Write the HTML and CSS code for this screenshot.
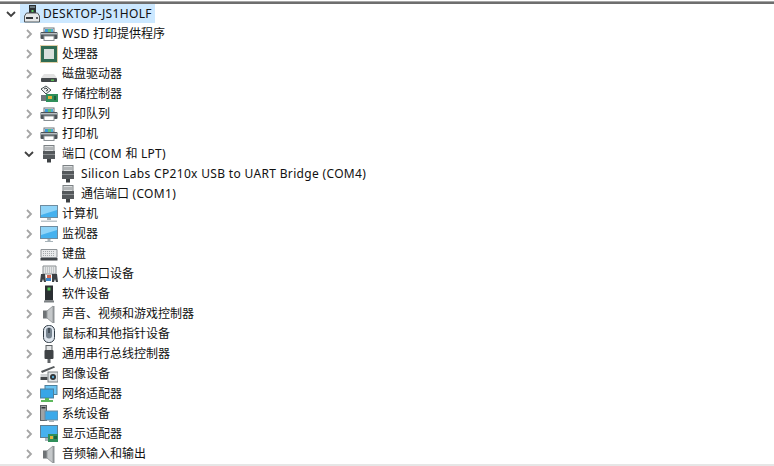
FILE: index.html
```html
<!DOCTYPE html>
<html lang="zh">
<head>
<meta charset="utf-8">
<title>设备管理器</title>
<link rel="stylesheet" href="styles.css">
</head>
<body>
<svg class="defs" width="0" height="0">
  <defs>
    <symbol id="chev-r" viewBox="0 0 10 10"><path d="M3 1l4 4-4 4" fill="none" stroke="#a6a6a6" stroke-width="1.8"/></symbol>
    <symbol id="chev-d" viewBox="0 0 10 10"><path d="M1 3l4 4 4-4" fill="none" stroke="#404040" stroke-width="1.8"/></symbol>
    <symbol id="pc" viewBox="0 0 18 18"><rect x="6" y="0" width="7" height="9" fill="#2b3033"/><rect x="7" y="1" width="5" height="2" fill="#6d7a80"/><rect x="8.500" y="5" width="2" height="2" fill="#57c95a"/><path d="M1.500 11l2-3h11l2 3v6h-15z" fill="#e6e8e9" stroke="#53585b"/><rect x="3" y="12" width="7" height="2" fill="#33383b"/><rect x="13" y="12" width="2" height="2" fill="#5a5f62"/></symbol>
    <symbol id="printer" viewBox="0 0 18 18"><rect x="4" y="3" width="10" height="4" fill="#fff" stroke="#6a7378"/><rect x="5" y="4" width="3" height="3" fill="#3d9ad6"/><rect x="8" y="4" width="3" height="3" fill="#5cc07a"/><rect x="11" y="4" width="2" height="3" fill="#4fb0d8"/><rect x="0.500" y="7" width="17" height="7" rx="1" fill="#4c5459"/><rect x="1" y="8" width="16" height="1.500" fill="#b8bfc3"/><rect x="4" y="11" width="10" height="4.500" fill="#fff" stroke="#8a9094"/></symbol>
    <symbol id="cpu" viewBox="0 0 18 18"><rect x="0.500" y="0.500" width="17" height="17" fill="none" stroke="#c2a04e" stroke-dasharray="1 1"/><rect x="1" y="1" width="16" height="16" fill="#2f6b52"/><rect x="4" y="4" width="10" height="10" fill="#d9e0dc"/></symbol>
    <symbol id="disk" viewBox="0 0 18 18"><path d="M4 9h10l3 4v4H1v-4z" fill="#e2e2e2"/><rect x="1" y="13" width="16" height="4" rx="1" fill="#44494c"/><rect x="11" y="14.500" width="3" height="1.500" fill="#58c04f"/></symbol>
    <symbol id="storage" viewBox="0 0 18 18"><path d="M1 4l5-3 5 4-5 4z" fill="#eef0f0" stroke="#4a5256"/><path d="M4 4l2-1 2 2-2 1" stroke="#3b4144" fill="none"/><path d="M1 10h7v6H1z" fill="#6f767a"/><rect x="6" y="9" width="12" height="8" fill="#2f8f5a"/><rect x="8" y="11" width="4" height="3" fill="#e2b23c"/><rect x="14" y="11" width="2" height="4" fill="#1e5f3d"/></symbol>
    <symbol id="port" viewBox="0 0 18 18"><rect x="4" y="0.500" width="10" height="6" fill="#d9dcdd" stroke="#7b8083"/><path d="M6 2v3M8 2v3M10 2v3M12 2v3" stroke="#8b8f92"/><rect x="3" y="6" width="12" height="8" fill="#55595c"/><rect x="3" y="9" width="12" height="1" fill="#8a8e90"/><rect x="7" y="14" width="4" height="3.500" fill="#3d4144"/></symbol>
    <symbol id="computer" viewBox="0 0 18 18"><rect x="0.500" y="0.500" width="17" height="12" fill="#46b1ee" stroke="#6e8ca0"/><path d="M1 1h16v4L1 10z" fill="#8fd4f8"/><rect x="7" y="13" width="4" height="2" fill="#a8b4ba"/><rect x="1" y="15.500" width="16" height="1.500" fill="#bcc6cb"/></symbol>
    <symbol id="monitor" viewBox="0 0 18 18"><rect x="0.500" y="1.500" width="17" height="12" fill="#46b1ee" stroke="#6e8ca0"/><path d="M1 2h16v3L1 10z" fill="#8fd4f8"/><rect x="7.500" y="14" width="3" height="2" fill="#a8b4ba"/><rect x="5" y="16" width="8" height="1" fill="#a8b4ba"/></symbol>
    <symbol id="keyboard" viewBox="0 0 18 18"><path d="M1 4.500h16v8H1z" fill="#e8eaeb" stroke="#8f9498"/><path d="M3 6.500h12M3 8.500h12M3 10.500h12" stroke="#a5aaad" stroke-dasharray="1 1"/><rect x="0.500" y="13" width="17" height="2.500" fill="#3e4347"/></symbol>
    <symbol id="hid" viewBox="0 0 18 18"><path d="M3 1h13v8H3z" fill="#e4e6e7" stroke="#8a8f92"/><path d="M5 3h9M5 5h9M5 7h9" stroke="#9fa4a7" stroke-dasharray="1 1"/><path d="M1 9h4l1 8H4l-1-3-1 3H0z" fill="#3d4246"/><path d="M12 9h5l1 8h-2l-1-3-1 3h-2z" fill="#3d4246"/><rect x="7" y="10" width="4" height="3" fill="#d4654f"/><rect x="6" y="13" width="5" height="3" fill="#3f87c8"/></symbol>
    <symbol id="soft" viewBox="0 0 18 18"><rect x="5" y="0.500" width="8" height="15" fill="#2b2f32"/><rect x="7.500" y="2.500" width="3" height="3" fill="#57c95a"/><rect x="4" y="15.500" width="10" height="2" fill="#7c8184"/></symbol>
    <symbol id="speaker" viewBox="0 0 18 18"><rect x="3" y="5.500" width="5" height="8" fill="#6f7376"/><path d="M7 6l6-5v17l-6-5z" fill="#c5c8ca" stroke="#9a9ea0"/><rect x="13" y="1" width="1.500" height="17" fill="#8e9295"/></symbol>
    <symbol id="mouse" viewBox="0 0 18 18"><rect x="3.500" y="0.500" width="11" height="17" rx="5" fill="#dfe6ee" stroke="#2f3a44"/><rect x="6" y="2.500" width="6" height="11" rx="3" fill="#76838f"/><rect x="8.200" y="3" width="1.600" height="5" fill="#39434c"/></symbol>
    <symbol id="usb" viewBox="0 0 18 18"><rect x="6" y="0.500" width="6" height="5" fill="#e2e4e5" stroke="#5b6063"/><rect x="4.500" y="5" width="9" height="9" rx="1" fill="#3f4346"/><rect x="7.500" y="14" width="3" height="4" fill="#5f6366"/></symbol>
    <symbol id="camera" viewBox="0 0 18 18"><path d="M1 6l13-5 1 1.500L2 8z" fill="#55595c"/><rect x="0.500" y="9" width="7" height="3" fill="#d0d3d5"/><rect x="0.500" y="12" width="7" height="3" fill="#44484b"/><rect x="8" y="7" width="10" height="10" fill="#dfe3e5" stroke="#7c8184"/><circle cx="13" cy="12" r="3" fill="#2f3336"/><circle cx="13" cy="12" r="1.200" fill="#57a9d6"/></symbol>
    <symbol id="net" viewBox="0 0 18 18"><rect x="5" y="0.500" width="12" height="9" fill="#6cc4f2" stroke="#4d7f9b"/><rect x="0.500" y="4" width="13" height="9" fill="#37a6e8" stroke="#4d7f9b"/><path d="M5 13h4v2h4v2H1v-2h4z" fill="#5cb85c"/></symbol>
    <symbol id="system" viewBox="0 0 18 18"><rect x="0.500" y="0.500" width="6" height="15" fill="#9ea3a6" stroke="#5d6265"/><rect x="1.500" y="2" width="4" height="1.500" fill="#33383b"/><rect x="5" y="6" width="13" height="9" fill="#3ba9ea" stroke="#6e8ca0"/><rect x="9" y="15" width="5" height="2" fill="#a8b4ba"/></symbol>
    <symbol id="display" viewBox="0 0 18 18"><rect x="0.500" y="0.500" width="17" height="12" fill="#46b1ee" stroke="#5f7f92"/><rect x="5" y="13" width="3" height="3" fill="#a8b4ba"/><rect x="8" y="9" width="10" height="8" fill="#2f8f5a"/><rect x="10" y="11" width="3" height="3" fill="#e2b23c"/><rect x="14" y="11" width="3" height="3" fill="#1e5f3d"/></symbol>
  </defs>
</svg>
<main class="tree">
  <div class="row root"><svg class="chev"><use href="#chev-d"/></svg><span class="sel"><svg class="ico"><use href="#pc"/></svg><span class="label lat">DESKTOP-JS1HOLF</span></span></div>
  <div class="row l1"><svg class="chev"><use href="#chev-r"/></svg><svg class="ico"><use href="#printer"/></svg><span class="label"><span class="lat">WSD </span>打印提供程序</span></div>
  <div class="row l1"><svg class="chev"><use href="#chev-r"/></svg><svg class="ico"><use href="#cpu"/></svg><span class="label">处理器</span></div>
  <div class="row l1"><svg class="chev"><use href="#chev-r"/></svg><svg class="ico"><use href="#disk"/></svg><span class="label">磁盘驱动器</span></div>
  <div class="row l1"><svg class="chev"><use href="#chev-r"/></svg><svg class="ico"><use href="#storage"/></svg><span class="label">存储控制器</span></div>
  <div class="row l1"><svg class="chev"><use href="#chev-r"/></svg><svg class="ico"><use href="#printer"/></svg><span class="label">打印队列</span></div>
  <div class="row l1"><svg class="chev"><use href="#chev-r"/></svg><svg class="ico"><use href="#printer"/></svg><span class="label">打印机</span></div>
  <div class="row l1"><svg class="chev"><use href="#chev-d"/></svg><svg class="ico"><use href="#port"/></svg><span class="label">端口<span class="lat"> (COM </span>和<span class="lat"> LPT)</span></span></div>
  <div class="row l2"><svg class="ico"><use href="#port"/></svg><span class="label lat">Silicon Labs CP210x USB to UART Bridge (COM4)</span></div>
  <div class="row l2"><svg class="ico"><use href="#port"/></svg><span class="label">通信端口<span class="lat"> (COM1)</span></span></div>
  <div class="row l1"><svg class="chev"><use href="#chev-r"/></svg><svg class="ico"><use href="#computer"/></svg><span class="label">计算机</span></div>
  <div class="row l1"><svg class="chev"><use href="#chev-r"/></svg><svg class="ico"><use href="#monitor"/></svg><span class="label">监视器</span></div>
  <div class="row l1"><svg class="chev"><use href="#chev-r"/></svg><svg class="ico"><use href="#keyboard"/></svg><span class="label">键盘</span></div>
  <div class="row l1"><svg class="chev"><use href="#chev-r"/></svg><svg class="ico"><use href="#hid"/></svg><span class="label">人机接口设备</span></div>
  <div class="row l1"><svg class="chev"><use href="#chev-r"/></svg><svg class="ico"><use href="#soft"/></svg><span class="label">软件设备</span></div>
  <div class="row l1"><svg class="chev"><use href="#chev-r"/></svg><svg class="ico"><use href="#speaker"/></svg><span class="label">声音、视频和游戏控制器</span></div>
  <div class="row l1"><svg class="chev"><use href="#chev-r"/></svg><svg class="ico"><use href="#mouse"/></svg><span class="label">鼠标和其他指针设备</span></div>
  <div class="row l1"><svg class="chev"><use href="#chev-r"/></svg><svg class="ico"><use href="#usb"/></svg><span class="label">通用串行总线控制器</span></div>
  <div class="row l1"><svg class="chev"><use href="#chev-r"/></svg><svg class="ico"><use href="#camera"/></svg><span class="label">图像设备</span></div>
  <div class="row l1"><svg class="chev"><use href="#chev-r"/></svg><svg class="ico"><use href="#net"/></svg><span class="label">网络适配器</span></div>
  <div class="row l1"><svg class="chev"><use href="#chev-r"/></svg><svg class="ico"><use href="#system"/></svg><span class="label">系统设备</span></div>
  <div class="row l1"><svg class="chev"><use href="#chev-r"/></svg><svg class="ico"><use href="#display"/></svg><span class="label">显示适配器</span></div>
  <div class="row l1"><svg class="chev"><use href="#chev-r"/></svg><svg class="ico"><use href="#speaker"/></svg><span class="label">音频输入和输出</span></div>
</main>
</body>
</html>
```
FILE: styles.css
```css
html, body {
  margin: 0;
  padding: 0;
  height: 100%;
  background: #fff;
  overflow: hidden;
}
body {
  font-family: "Noto Sans", "Noto Sans CJK SC", sans-serif;
  font-size: 12px;
  color: #111;
  padding-top: 2px;
  box-sizing: border-box;
}
.defs {
  position: absolute;
}
.tree {
  box-sizing: border-box;
  height: 464px;
  border-top: 2px solid #6e6e6e;
  border-bottom: 2px solid #e6e6e6;
  box-shadow: 0 -1px 0 #a6a6a6;
}
.row {
  display: flex;
  align-items: center;
  height: 20px;
  white-space: nowrap;
}
.chev {
  width: 10px;
  height: 10px;
  flex: none;
  margin-right: 6px;
}
.ico {
  width: 18px;
  height: 18px;
  flex: none;
  margin-right: 4px;
}
.root {
  align-items: flex-start;
  padding-left: 6px;
}
.root .chev {
  margin: 5px 4px 0 0;
}
.root .ico {
  margin-right: 2px;
}
.l1 {
  padding-left: 24px;
}
.l2 {
  padding-left: 59px;
}
.sel {
  display: flex;
  align-items: center;
  height: 19px;
  padding: 0 3px;
  background: #cce8ff;
}
.label {
  line-height: 20px;
}
.lat {
  letter-spacing: 0.33px;
}
```
